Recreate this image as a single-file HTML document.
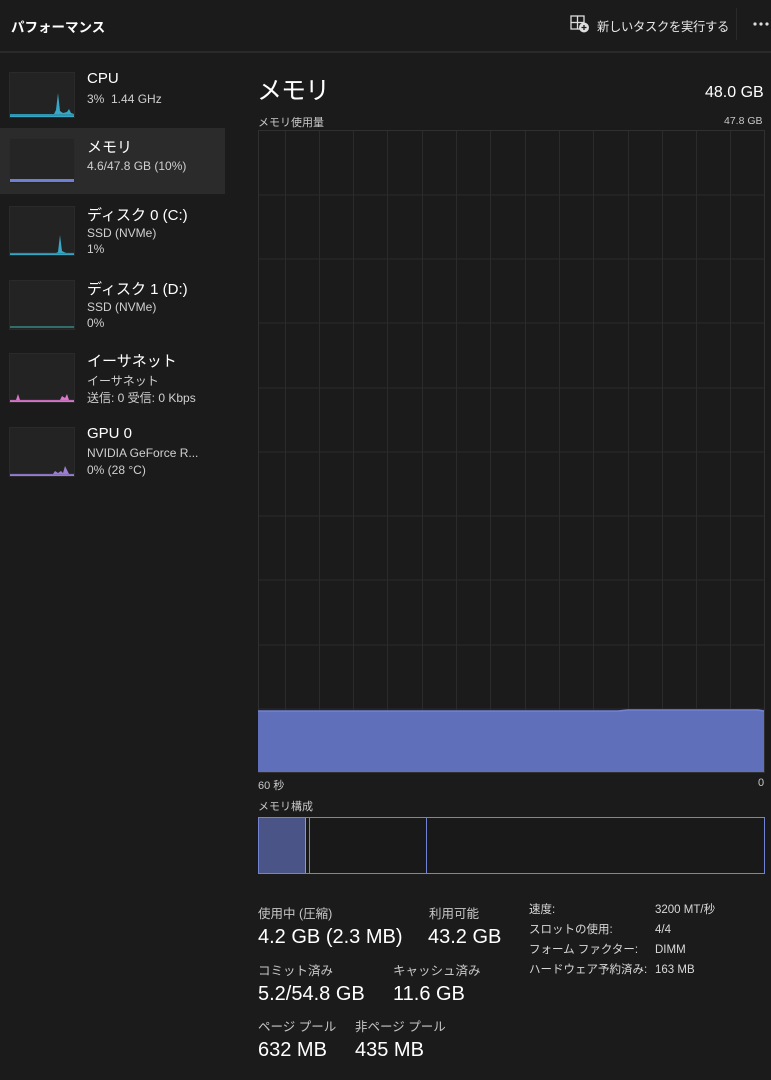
<!DOCTYPE html>
<html><head><meta charset="utf-8"><style>
body{margin:0;width:771px;height:1080px;background:#1b1b1b;font-family:"Liberation Sans","Noto Sans CJK JP",sans-serif;color:#fff;overflow:hidden;position:relative}
.a{position:absolute;white-space:nowrap}
.th{position:absolute;left:9px;width:66px;height:46px;background:#232323;border:1px solid #2a2a2a;box-sizing:border-box}
.t{font-size:15px;color:#fff}
.s{font-size:12px;color:#d0d0d0}
.lab{font-size:12.5px;color:#c8c8c8}
.val{font-size:20px;color:#fff}
.sm{font-size:11.5px;color:#d8d8d8;line-height:14px}
</style></head><body>
<div class="a" style="left:11px;top:16px;font-size:13.5px;font-weight:bold">パフォーマンス</div>
<svg class="a" style="left:570px;top:15px" width="20" height="18" viewBox="0 0 20 18"><rect x="1" y="1" width="13" height="13" fill="none" stroke="#ddd" stroke-width="1.3"/><line x1="7.5" y1="1" x2="7.5" y2="14" stroke="#ddd" stroke-width="1.3"/><line x1="1" y1="7.5" x2="14" y2="7.5" stroke="#ddd" stroke-width="1.3"/><circle cx="14" cy="12.5" r="5" fill="#ddd"/><path d="M14 10v5M11.5 12.5h5" stroke="#1b1b1b" stroke-width="1.3"/></svg>
<div class="a" style="left:597px;top:17px;font-size:12.3px;color:#e8e8e8;letter-spacing:-0.3px">新しいタスクを実行する</div>
<div class="a" style="left:736px;top:8px;width:1px;height:32px;background:#2a2a2a"></div>
<svg class="a" style="left:753px;top:22px" width="16" height="4"><circle cx="2" cy="2" r="1.6" fill="#ddd"/><circle cx="8" cy="2" r="1.6" fill="#ddd"/><circle cx="14" cy="2" r="1.6" fill="#ddd"/></svg>
<div class="a" style="left:0;top:51px;width:771px;height:2px;background:#2a2a2a"></div>

<div class="a" style="left:0;top:128px;width:225px;height:66px;background:#2b2b2b"></div>

<div class="th" style="top:72px"><svg width="64" height="44" style="position:absolute;left:0;top:0"><path d="M0 41 L44 41 L46 37 L48 20 L50 38 L53 40 L57 39 L59 36 L61 40 L64 41 L64 44 L0 44Z" fill="#37a9c7"/><line x1="0" y1="42" x2="64" y2="42" stroke="#2f8ea6" stroke-width="1.5"/></svg></div>
<div class="a t" style="left:87px;top:70px">CPU</div>
<div class="a s" style="left:87px;top:92px">3%&nbsp; 1.44 GHz</div>

<div class="th" style="top:138px;background:#252525"><div style="position:absolute;left:0;bottom:1px;width:64px;height:3px;background:#6f7fd6"></div></div>
<div class="a t" style="left:87px;top:136px">メモリ</div>
<div class="a s" style="left:87px;top:159px">4.6/47.8 GB (10%)</div>

<div class="th" style="top:206px;height:50px"><svg width="64" height="48" style="position:absolute;left:0;top:0"><path d="M0 46 L46 46 L48 45 L50 28 L52 44 L56 46 L64 46 L64 48 L0 48Z" fill="#37a9c7"/><line x1="0" y1="46.5" x2="64" y2="46.5" stroke="#2f8ea6" stroke-width="1.2"/></svg></div>
<div class="a t" style="left:87px;top:204px">ディスク 0 (C:)</div>
<div class="a s" style="left:87px;top:226px">SSD (NVMe)</div>
<div class="a s" style="left:87px;top:242px">1%</div>

<div class="th" style="top:280px;height:50px"><div style="position:absolute;left:0;bottom:1px;width:64px;height:2px;background:#2f6e6a"></div></div>
<div class="a t" style="left:87px;top:278px">ディスク 1 (D:)</div>
<div class="a s" style="left:87px;top:300px">SSD (NVMe)</div>
<div class="a s" style="left:87px;top:316px">0%</div>

<div class="th" style="top:353px;height:50px"><svg width="64" height="48" style="position:absolute;left:0;top:0"><path d="M0 46 L6 46 L8 40 L10 46 L50 46 L52 42 L55 44 L57 40 L59 46 L64 46 L64 48 L0 48Z" fill="#d878c9"/><line x1="0" y1="46.5" x2="64" y2="46.5" stroke="#c46ab8" stroke-width="1.2"/></svg></div>
<div class="a t" style="left:87px;top:350px">イーサネット</div>
<div class="a s" style="left:87px;top:372px">イーサネット</div>
<div class="a s" style="left:87px;top:389px">送信: 0 受信: 0 Kbps</div>

<div class="th" style="top:427px;height:50px"><svg width="64" height="48" style="position:absolute;left:0;top:0"><path d="M0 46 L43 46 L45 43 L48 45 L51 43 L53 45 L55 38 L57 42 L59 46 L64 46 L64 48 L0 48Z" fill="#9b7fd1"/><line x1="0" y1="46.5" x2="64" y2="46.5" stroke="#8a70c0" stroke-width="1.2"/></svg></div>
<div class="a t" style="left:87px;top:425px">GPU 0</div>
<div class="a s" style="left:87px;top:446px">NVIDIA GeForce R...</div>
<div class="a s" style="left:87px;top:463px">0% (28 °C)</div>

<div class="a" style="left:257px;top:71px;font-size:25px;letter-spacing:-1px">メモリ</div>
<div class="a" style="left:705px;top:84px;font-size:16px">48.0 GB</div>
<div class="a" style="left:258px;top:114px;font-size:11px;color:#c8c8c8">メモリ使用量</div>
<div class="a" style="left:724px;top:115px;font-size:10.5px;color:#c8c8c8">47.8 GB</div>

<svg class="a" style="left:258px;top:130px" width="507" height="643">
<g stroke="#2b2b2b" stroke-width="1">
<line x1="27.5" y1="0" x2="27.5" y2="643"/><line x1="61.5" y1="0" x2="61.5" y2="643"/><line x1="95.5" y1="0" x2="95.5" y2="643"/><line x1="129.5" y1="0" x2="129.5" y2="643"/><line x1="164.5" y1="0" x2="164.5" y2="643"/><line x1="198.5" y1="0" x2="198.5" y2="643"/><line x1="232.5" y1="0" x2="232.5" y2="643"/><line x1="267.5" y1="0" x2="267.5" y2="643"/><line x1="301.5" y1="0" x2="301.5" y2="643"/><line x1="335.5" y1="0" x2="335.5" y2="643"/><line x1="370.5" y1="0" x2="370.5" y2="643"/><line x1="404.5" y1="0" x2="404.5" y2="643"/><line x1="438.5" y1="0" x2="438.5" y2="643"/><line x1="472.5" y1="0" x2="472.5" y2="643"/>
<line x1="0" y1="65" x2="507" y2="65"/><line x1="0" y1="129" x2="507" y2="129"/><line x1="0" y1="193" x2="507" y2="193"/><line x1="0" y1="258" x2="507" y2="258"/><line x1="0" y1="322" x2="507" y2="322"/><line x1="0" y1="386" x2="507" y2="386"/><line x1="0" y1="450" x2="507" y2="450"/><line x1="0" y1="515" x2="507" y2="515"/><line x1="0" y1="579" x2="507" y2="579"/>
</g>
<rect x="0.5" y="0.5" width="506" height="642" fill="none" stroke="#303030"/>
<path d="M0 581 L360 581 L370 580 L500 580 L506 581 L506 642 L0 642Z" fill="#5f6fb9"/>
<path d="M0 581 L360 581 L370 580 L500 580 L506 581" fill="none" stroke="#7383d4" stroke-width="1.5"/>
</svg>
<div class="a" style="left:258px;top:777px;font-size:11px;color:#c8c8c8">60 秒</div>
<div class="a" style="left:758px;top:777px;font-size:11px;color:#c8c8c8">0</div>
<div class="a" style="left:258px;top:798px;font-size:11px;color:#c8c8c8">メモリ構成</div>

<div class="a" style="left:258px;top:817px;width:507px;height:57px;border:1px solid #7383d4;box-sizing:border-box;background:#191919">
<div style="position:absolute;left:0;top:0;width:46px;height:55px;background:#4a5486"></div>
<div style="position:absolute;left:46px;top:0;width:1px;height:55px;background:#8595e4"></div>
<div style="position:absolute;left:50px;top:0;width:1px;height:55px;background:#7383d4"></div>
<div style="position:absolute;left:167px;top:0;width:1px;height:55px;background:#7383d4"></div>
</div>

<div class="a lab" style="left:258px;top:903px">使用中 (圧縮)</div>
<div class="a val" style="left:258px;top:926px">4.2 GB (2.3 MB)</div>
<div class="a lab" style="left:429px;top:903px">利用可能</div>
<div class="a val" style="left:428px;top:926px">43.2 GB</div>
<div class="a lab" style="left:258px;top:960px">コミット済み</div>
<div class="a val" style="left:258px;top:983px">5.2/54.8 GB</div>
<div class="a lab" style="left:393px;top:960px">キャッシュ済み</div>
<div class="a val" style="left:393px;top:983px">11.6 GB</div>
<div class="a lab" style="left:258px;top:1016px">ページ プール</div>
<div class="a val" style="left:258px;top:1039px">632 MB</div>
<div class="a lab" style="left:355px;top:1016px">非ページ プール</div>
<div class="a val" style="left:355px;top:1039px">435 MB</div>

<div class="a sm" style="left:529px;top:903px">速度:</div>
<div class="a sm" style="left:655px;top:903px">3200 MT/秒</div>
<div class="a sm" style="left:529px;top:923px">スロットの使用:</div>
<div class="a sm" style="left:655px;top:923px">4/4</div>
<div class="a sm" style="left:529px;top:943px">フォーム ファクター:</div>
<div class="a sm" style="left:655px;top:943px">DIMM</div>
<div class="a sm" style="left:529px;top:963px">ハードウェア予約済み:</div>
<div class="a sm" style="left:655px;top:963px">163 MB</div>
</body></html>
